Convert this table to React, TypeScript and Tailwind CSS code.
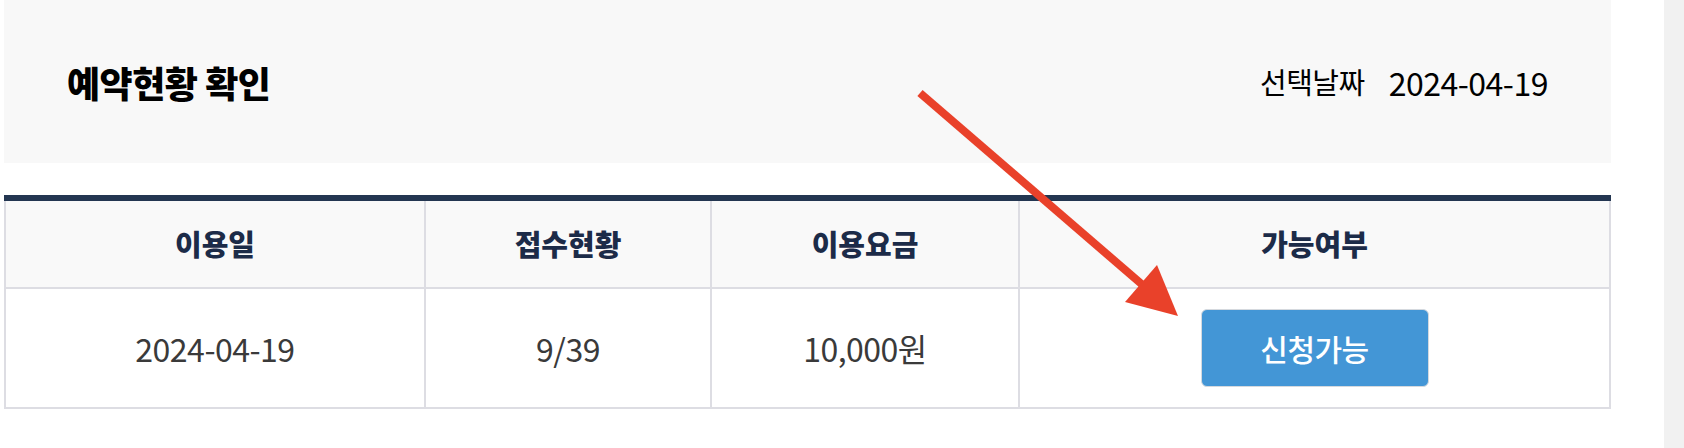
import React from "react"

const columns = ["이용일", "접수현황", "이용요금", "가능여부"]

function Arrow() {
  // red annotation arrow drawn over the page
  return (
    <svg
      className="absolute left-0 top-0 pointer-events-none"
      width="1684"
      height="448"
      viewBox="0 0 1684 448"
    >
      <line x1="920" y1="93" x2="1145" y2="287" stroke="#e9412a" strokeWidth="8" />
      <polygon points="1178,316 1125,302 1157,265" fill="#e9412a" />
    </svg>
  )
}

export default function App() {
  return (
    <div className="relative flex min-h-[448px] bg-white font-['Noto_Sans_CJK_KR','Noto_Sans',sans-serif]">
      <div className="flex-1 pl-1 pr-[53px]">
        {/* page header */}
        <div className="flex h-[163px] items-center justify-between bg-[#f8f8f8] px-[63px]">
          <h2 className="text-[36px] font-black tracking-[-0.5px] text-black">예약현황 확인</h2>
          <div className="flex items-center gap-6 text-black">
            <span className="text-[29px] tracking-[-0.5px]">선택날짜</span>
            <span className="text-[32px] tracking-[-0.5px]">2024-04-19</span>
          </div>
        </div>

        {/* reservation table */}
        <div className="mt-8 border-t-[6px] border-[#233651]">
          <div className="grid grid-cols-[420px_286px_308px_1fr] border-l-2 border-[#dddde3]">
            {columns.map((col) => (
              <div
                key={col}
                className="flex h-[88px] items-center justify-center border-r-2 border-b-2 border-[#dddde3] bg-[#f9f9f9] text-[29px] font-black text-[#1c2b48]"
              >
                {col}
              </div>
            ))}
            <div className="flex h-[120px] items-center justify-center border-r-2 border-b-2 border-[#dddde3] text-[32px] tracking-[-0.5px] text-[#3a3a3a]">
              2024-04-19
            </div>
            <div className="flex h-[120px] items-center justify-center border-r-2 border-b-2 border-[#dddde3] text-[32px] tracking-[-0.5px] text-[#3a3a3a]">
              9/39
            </div>
            <div className="flex h-[120px] items-center justify-center border-r-2 border-b-2 border-[#dddde3] text-[32px] tracking-[-0.5px] text-[#3a3a3a]">
              10,000원
            </div>
            <div className="flex h-[120px] items-center justify-center border-r-2 border-b-2 border-[#dddde3]">
              <button className="flex h-[78px] w-[228px] items-center justify-center rounded-md border border-[#d5d9de] bg-[#4396d6] text-[30px] font-medium tracking-[-0.5px] text-white">
                신청가능
              </button>
            </div>
          </div>
        </div>
      </div>
      <div className="w-5 bg-[#f1f1f1]" />
      <Arrow />
    </div>
  )
}
